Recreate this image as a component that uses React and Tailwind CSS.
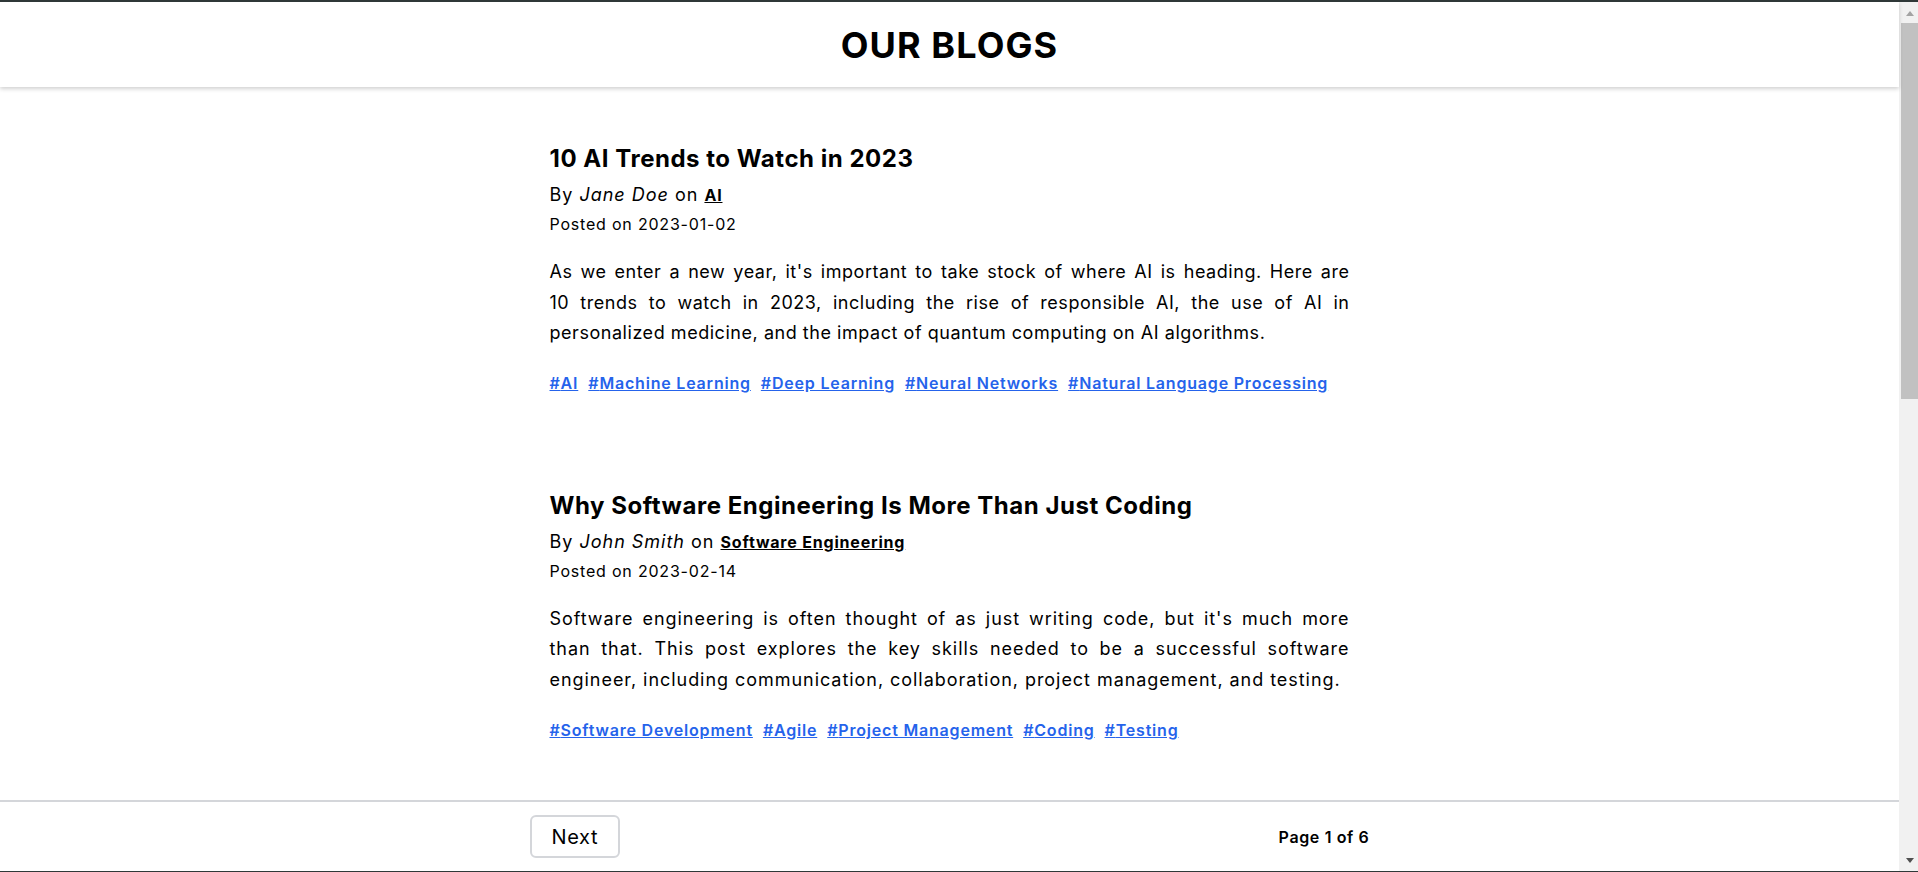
import React from "react";

const posts = [
  {
    title: "10 AI Trends to Watch in 2023",
    author: "Jane Doe",
    category: "AI",
    date: "2023-01-02",
    track: "tracking-[0.03em]",
    lines: [
      "As we enter a new year, it's important to take stock of where AI is heading. Here are",
      "10 trends to watch in 2023, including the rise of responsible AI, the use of AI in",
      "personalized medicine, and the impact of quantum computing on AI algorithms.",
    ],
    tags: ["AI", "Machine Learning", "Deep Learning", "Neural Networks", "Natural Language Processing"],
  },
  {
    title: "Why Software Engineering Is More Than Just Coding",
    author: "John Smith",
    category: "Software Engineering",
    date: "2023-02-14",
    track: "tracking-[0.053em]",
    lines: [
      "Software engineering is often thought of as just writing code, but it's much more",
      "than that. This post explores the key skills needed to be a successful software",
      "engineer, including communication, collaboration, project management, and testing.",
    ],
    tags: ["Software Development", "Agile", "Project Management", "Coding", "Testing"],
  },
];

function Post({ post, first }) {
  const last = post.lines.length - 1;
  return (
    <article className={first ? "" : "mt-[95px]"}>
      <h2 className="text-2xl leading-8 font-bold text-black tracking-[0.022em]">{post.title}</h2>
      <p className="mt-[6px] text-lg leading-7 text-black tracking-[0.055em]">
        By <em className="italic">{post.author}</em> on{" "}
        <a href="#" className="text-base font-bold underline text-black tracking-[0.05em]">
          {post.category}
        </a>
      </p>
      <p className="mt-[3px] text-base leading-6 text-black tracking-[0.05em]">Posted on {post.date}</p>
      <p className={`mt-[21px] text-lg leading-[1.7] text-black text-justify ${post.track}`}>
        {post.lines.map((l, i) =>
          i === last ? (
            <span key={i} className="block">
              {l}
            </span>
          ) : (
            <span key={i} className="block whitespace-nowrap [text-align-last:justify]">
              {l}{" "}
            </span>
          )
        )}
      </p>
      <div className="mt-[22px] flex flex-wrap gap-x-[10px] text-base leading-6 font-semibold tracking-[0.05em]">
        {post.tags.map((t) => (
          <a key={t} href="#" className="text-[#2563eb] underline">
            #{t}
          </a>
        ))}
      </div>
    </article>
  );
}

export default function App() {
  return (
    <div className="h-[872px] flex flex-col bg-white border-t-2 border-b border-[#2f3838] overflow-hidden font-['Inter',sans-serif]">
      <div className="flex flex-1 min-h-0">
        <div className="flex-1 min-w-0 flex flex-col">
          <header className="h-[85px] shrink-0 flex items-center justify-center bg-white relative z-10 shadow-[0_2px_4px_rgba(0,0,0,0.18)]">
            <h1 className="text-4xl leading-10 font-bold text-black tracking-[0.03em]">OUR BLOGS</h1>
          </header>
          <main className="flex-1 min-h-0 overflow-hidden">
            <div className="w-[800px] mx-auto pt-[56px]">
              {posts.map((p, i) => (
                <Post key={p.title} post={p} first={i === 0} />
              ))}
            </div>
          </main>
          <footer className="h-[71px] shrink-0 border-t-2 border-[#d4d6da] flex items-center bg-white">
            <div className="w-[840px] mx-auto flex items-center justify-between">
              <button className="h-[43px] px-5 border-2 border-[#d4d6da] rounded-md text-xl leading-7 text-black bg-white tracking-[0.03em]">
                Next
              </button>
              <span className="text-base font-semibold text-black tracking-[0.04em]">Page 1 of 6</span>
            </div>
          </footer>
        </div>
        <div className="w-[19px] shrink-0 bg-[#f1f1f1] flex flex-col">
          <div className="pt-[9px] flex justify-end">
            <div className="w-[17px] flex justify-center">
              <div className="w-0 h-0 border-x-[4.5px] border-x-transparent border-b-[5px] border-b-[#a3a3a3]" />
            </div>
          </div>
          <div className="mt-[7px] ml-[2px] h-[376px] bg-[#c1c1c1]" />
          <div className="flex-1" />
          <div className="pb-[8px] flex justify-end">
            <div className="w-[17px] flex justify-center">
              <div className="w-0 h-0 border-x-[4.5px] border-x-transparent border-t-[5px] border-t-[#505050]" />
            </div>
          </div>
        </div>
      </div>
    </div>
  );
}
